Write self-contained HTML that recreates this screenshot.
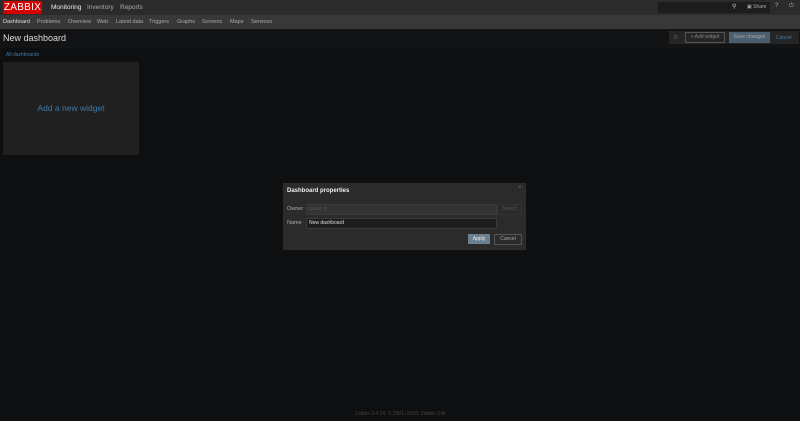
<html><head><style>
body{margin:0;width:800px;height:421px;background:#0e0f11;font-family:"Liberation Sans",sans-serif;position:relative;overflow:hidden}
.a{position:absolute}
.top{left:0;top:0;width:800px;height:15px;background:#2b2b2b}
.sub{left:0;top:15px;width:800px;height:14px;background:#383838}
.t{font-size:6px;color:#aaa;white-space:nowrap}
</style></head><body>
<div class="a top"></div><div class="a sub"></div>
<div class="a" style="left:3px;top:1px;width:39px;height:13px;background:#d40000;color:#fff;font-size:10px;line-height:13px;text-align:center;letter-spacing:.3px">ZABBIX</div>
<div class="a t" style="left:51px;top:4px;font-size:6.5px;color:#eee">Monitoring</div>
<div class="a t" style="left:87px;top:4px;font-size:6.5px">Inventory</div>
<div class="a t" style="left:120px;top:4px;font-size:6.5px">Reports</div>
<div class="a" style="left:658px;top:2px;width:112px;height:11px;background:#1c1c1c"></div>
<div class="a t" style="left:732px;top:3px;color:#ccc">⚲</div>
<div class="a t" style="left:747px;top:4px;font-size:5px">▣ Share</div>
<div class="a t" style="left:775px;top:3px">?</div>
<div class="a t" style="left:789px;top:3px">⏻</div>
<div class="a t" style="top:19px;left:3px;font-size:5.5px;color:#ddd">Dashboard</div>
<div class="a t" style="top:19px;left:37px;font-size:5.5px">Problems</div>
<div class="a t" style="top:19px;left:68px;font-size:5.5px">Overview</div>
<div class="a t" style="top:19px;left:97px;font-size:5.5px">Web</div>
<div class="a t" style="top:19px;left:116px;font-size:5.5px">Latest data</div>
<div class="a t" style="top:19px;left:149px;font-size:5.5px">Triggers</div>
<div class="a t" style="top:19px;left:177px;font-size:5.5px">Graphs</div>
<div class="a t" style="top:19px;left:202px;font-size:5.5px">Screens</div>
<div class="a t" style="top:19px;left:230px;font-size:5.5px">Maps</div>
<div class="a t" style="top:19px;left:251px;font-size:5.5px">Services</div>
<div class="a" style="left:0;top:29px;width:800px;height:19px;background:#111315"></div>
<div class="a" style="left:3px;top:33px;font-size:9px;color:#ddd">New dashboard</div>
<div class="a" style="left:669px;top:31px;width:130px;height:13px;background:#252525"></div>
<div class="a t" style="left:673px;top:34px;color:#555">⚙</div>
<div class="a t" style="left:685px;top:32px;width:38px;height:9px;border:1px solid #555;font-size:5px;line-height:9px;text-align:center;color:#888">+ Add widget</div>
<div class="a t" style="left:729px;top:32px;width:41px;height:11px;background:#4b5f6e;font-size:5px;line-height:11px;text-align:center;color:#aaa">Save changes</div>
<div class="a t" style="left:776px;top:35px;font-size:5px;color:#4a7fa6">Cancel</div>
<div class="a t" style="left:6px;top:52px;font-size:5px;color:#3d7ba8">All dashboards</div>
<div class="a" style="left:3px;top:62px;width:136px;height:93px;background:#202020"></div>
<div class="a" style="left:3px;top:103px;width:136px;text-align:center;font-size:8.5px;color:#3d7ba8">Add a new widget</div>
<div class="a" style="left:282px;top:182px;width:243px;height:67px;background:#2b2b2b;border:1px solid #111"></div>
<div class="a t" style="left:287px;top:188px;font-size:6px;color:#eee;font-weight:bold">Dashboard properties</div>
<div class="a t" style="left:518px;top:185px;color:#666;font-size:6px">×</div>
<div class="a t" style="left:287px;top:206px;font-size:5.5px">Owner</div>
<div class="a" style="left:306px;top:204px;width:189px;height:9px;background:#333;border:1px solid #3a3a3a"></div>
<div class="a t" style="left:309px;top:206px;font-size:5px;color:#555">guest ✕</div>
<div class="a" style="left:497px;top:204px;width:23px;height:9px;border:1px solid #333;font-size:5px;color:#555;text-align:center;line-height:9px">Select</div>
<div class="a t" style="left:287px;top:220px;font-size:5.5px">Name</div>
<div class="a" style="left:306px;top:218px;width:189px;height:9px;background:#1d1d1d;border:1px solid #3a3a3a"></div>
<div class="a t" style="left:309px;top:220px;font-size:5px;color:#ddd">New dashboard</div>
<div class="a" style="left:468px;top:234px;width:22px;height:10px;background:#6a7f90;font-size:5px;color:#eee;text-align:center;line-height:10px">Apply</div>
<div class="a" style="left:494px;top:234px;width:26px;height:9px;border:1px solid #555;font-size:5px;color:#aaa;text-align:center;line-height:9px">Cancel</div>
<div class="a t" style="left:0;top:411px;width:800px;text-align:center;font-size:5px;color:#444">Zabbix 3.4.14. © 2001–2018, Zabbix SIA</div>
</body></html>
